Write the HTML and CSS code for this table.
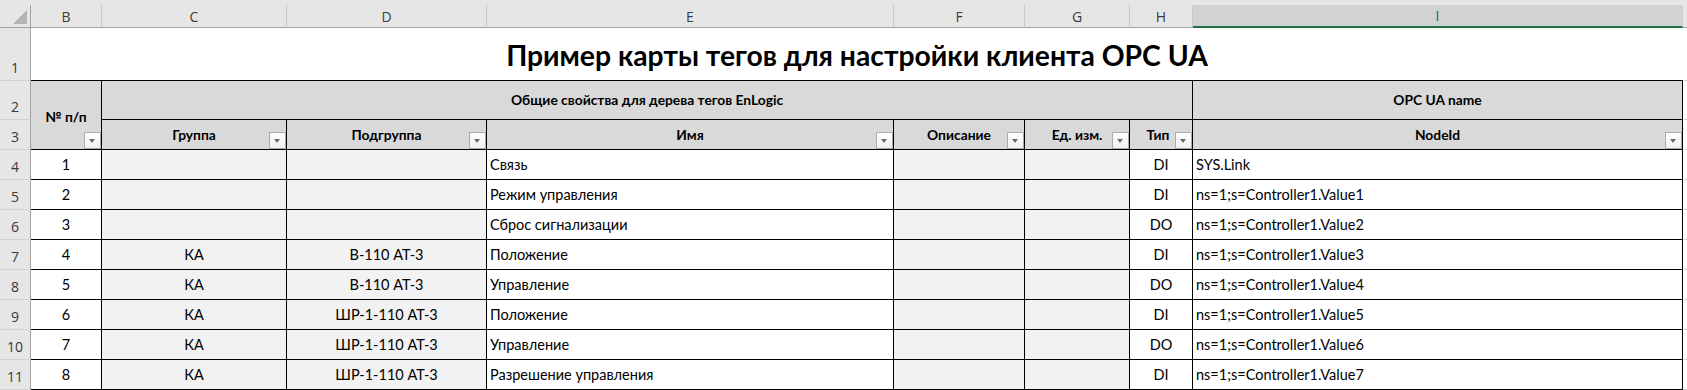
FILE: index.html
```html
<!DOCTYPE html>
<html lang="ru">
<head>
<meta charset="utf-8">
<title>Карта тегов OPC UA</title>
<link rel="stylesheet" href="styles.css">
</head>
<body>
<div class="top"></div>
<div class="sheet">
  <div class="ch corner"><svg class="tri" width="31" height="22" viewBox="0 0 31 22"><polygon points="27,5 27,19 13,19" fill="#b4b4b4"/></svg></div>
  <div class="ch">B</div>
  <div class="ch">C</div>
  <div class="ch">D</div>
  <div class="ch">E</div>
  <div class="ch">F</div>
  <div class="ch">G</div>
  <div class="ch">H</div>
  <div class="ch sel">I</div>
  <div class="ch last"></div>

  <div class="rh">1</div>
  <div class="title">Пример карты тегов для настройки клиента OPC UA</div>
  <div class="gl"></div>

  <div class="rh">2</div>
  <div class="hd num">№ п/п<span class="fb"></span></div>
  <div class="hd mid grp">Общие свойства для дерева тегов EnLogic</div>
  <div class="hd mid">OPC UA name</div>
  <div class="gl"></div>

  <div class="rh">3</div>
  <div class="hd low">Группа<span class="fb"></span></div>
  <div class="hd low">Подгруппа<span class="fb"></span></div>
  <div class="hd low">Имя<span class="fb"></span></div>
  <div class="hd low">Описание<span class="fb"></span></div>
  <div class="hd low">Ед. изм.<span class="fb"></span></div>
  <div class="hd low typ">Тип<span class="fb"></span></div>
  <div class="hd low">NodeId<span class="fb"></span></div>
  <div class="gl"></div>

  <div class="rh">4</div>
  <div class="c ctr">1</div><div class="c g ctr"></div><div class="c g ctr"></div>
  <div class="c">Связь</div><div class="c g"></div><div class="c g"></div>
  <div class="c ctr">DI</div><div class="c">SYS.Link</div><div class="gl"></div>

  <div class="rh">5</div>
  <div class="c ctr">2</div><div class="c g ctr"></div><div class="c g ctr"></div>
  <div class="c">Режим управления</div><div class="c g"></div><div class="c g"></div>
  <div class="c ctr">DI</div><div class="c">ns=1;s=Controller1.Value1</div><div class="gl"></div>

  <div class="rh">6</div>
  <div class="c ctr">3</div><div class="c g ctr"></div><div class="c g ctr"></div>
  <div class="c">Сброс сигнализации</div><div class="c g"></div><div class="c g"></div>
  <div class="c ctr">DO</div><div class="c">ns=1;s=Controller1.Value2</div><div class="gl"></div>

  <div class="rh">7</div>
  <div class="c ctr">4</div><div class="c g ctr">КА</div><div class="c g ctr">В-110 АТ-3</div>
  <div class="c">Положение</div><div class="c g"></div><div class="c g"></div>
  <div class="c ctr">DI</div><div class="c">ns=1;s=Controller1.Value3</div><div class="gl"></div>

  <div class="rh">8</div>
  <div class="c ctr">5</div><div class="c g ctr">КА</div><div class="c g ctr">В-110 АТ-3</div>
  <div class="c">Управление</div><div class="c g"></div><div class="c g"></div>
  <div class="c ctr">DO</div><div class="c">ns=1;s=Controller1.Value4</div><div class="gl"></div>

  <div class="rh">9</div>
  <div class="c ctr">6</div><div class="c g ctr">КА</div><div class="c g ctr">ШР-1-110 АТ-3</div>
  <div class="c">Положение</div><div class="c g"></div><div class="c g"></div>
  <div class="c ctr">DI</div><div class="c">ns=1;s=Controller1.Value5</div><div class="gl"></div>

  <div class="rh">10</div>
  <div class="c ctr">7</div><div class="c g ctr">КА</div><div class="c g ctr">ШР-1-110 АТ-3</div>
  <div class="c">Управление</div><div class="c g"></div><div class="c g"></div>
  <div class="c ctr">DO</div><div class="c">ns=1;s=Controller1.Value6</div><div class="gl"></div>

  <div class="rh">11</div>
  <div class="c ctr">8</div><div class="c g ctr">КА</div><div class="c g ctr">ШР-1-110 АТ-3</div>
  <div class="c">Разрешение управления</div><div class="c g"></div><div class="c g"></div>
  <div class="c ctr">DI</div><div class="c">ns=1;s=Controller1.Value7</div><div class="gl"></div>
</div>
</body>
</html>
```

FILE: styles.css
```css
html, body {
  margin: 0;
  padding: 0;
  background: #ffffff;
  font-family: Lato, "Open Sans", sans-serif;
  color: #000;
  overflow: hidden;
}

.top {
  height: 5px;
  background: #e6e6e6;
}

.sheet {
  display: grid;
  grid-template-columns: 31px 71px 185px 200px 407px 131px 105px 63px 490px 4px;
  grid-template-rows: 23px 53px 39px 30px repeat(8, 30px);
}

.sheet > div {
  box-sizing: border-box;
  display: flex;
  min-width: 0;
  overflow: hidden;
  position: relative;
  white-space: nowrap;
}

/* column letters */
.ch {
  background: #e6e6e6;
  border-right: 1px solid #c8c8c8;
  border-bottom: 1px solid #a3a3a3;
  align-items: center;
  justify-content: center;
  font-family: "Open Sans", sans-serif;
  font-size: 14px;
  color: #3a3a3a;
}
.ch.corner {
  border-right-color: #a3a3a3;
  padding: 0;
}
.ch.corner .tri {
  position: absolute;
  left: 0;
  top: 0;
}
.ch.sel {
  background: #d2d2d2;
  color: #1e6b40;
  border-bottom: 2px solid #217346;
  border-right-color: #d2d2d2;
}
.ch.last {
  border-right: none;
}

/* row numbers */
.rh {
  background: #e6e6e6;
  border-right: 1px solid #a3a3a3;
  border-bottom: 1px solid #d2d2d2;
  justify-content: center;
  align-items: flex-end;
  padding-bottom: 4px;
  font-family: "Open Sans", sans-serif;
  font-size: 14px;
  line-height: 16px;
  color: #3a3a3a;
}

.title {
  grid-column: 2 / 10;
  border-bottom: 1px solid #000;
  align-items: center;
  justify-content: center;
  font-weight: 700;
  font-size: 28.3px;
  padding-top: 2px;
}

.gl {
  border-bottom: 1px solid #d4d4d4;
}

/* header cells */
.hd {
  background: #d9d9d9;
  border-right: 1px solid #000;
  border-bottom: 1px solid #000;
  justify-content: center;
  font-weight: 700;
  font-size: 13.8px;
  line-height: 16px;
}
.hd.num {
  grid-row: span 2;
  align-items: center;
  padding-top: 3px;
}
.hd.grp {
  grid-column: span 6;
}
.hd.mid {
  align-items: center;
}
.hd.low {
  align-items: flex-end;
  padding-bottom: 6px;
}
.hd.typ {
  padding-right: 6px;
}

/* filter button */
.fb {
  position: absolute;
  right: 0;
  bottom: 0;
  width: 17px;
  height: 17px;
  box-sizing: border-box;
  border: 1px solid #a9acb0;
  background: linear-gradient(#ffffff, #eef1f4);
}
.fb::after {
  content: "";
  position: absolute;
  left: 4px;
  top: 6px;
  border-left: 3.5px solid transparent;
  border-right: 3.5px solid transparent;
  border-top: 4px solid #6b6b6b;
}

/* data cells */
.c {
  background: #ffffff;
  border-right: 1px solid #000;
  border-bottom: 1px solid #000;
  align-items: flex-end;
  padding: 0 3px 6px 3px;
  font-size: 14.5px;
  line-height: 16px;
}
.c.g {
  background: #f2f2f2;
}
.c.ctr {
  justify-content: center;
}
```
